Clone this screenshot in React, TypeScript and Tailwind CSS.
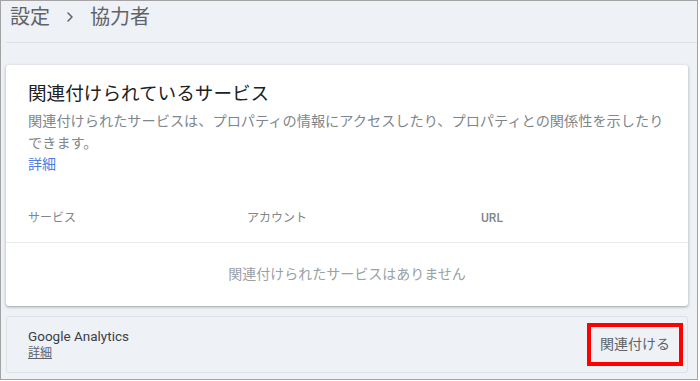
import { ChevronRight } from "lucide-react";

const font = {
  fontFamily: 'Roboto, "Noto Sans CJK JP", "Noto Sans", sans-serif',
};

export default function App() {
  return (
    <div className="h-[381px] w-[700px] bg-white" style={font}>
      <div className="h-[380px] w-[698px] overflow-hidden border border-[#a3a3a3] bg-[#eef1f6]">
        {/* breadcrumb */}
        <div className="ml-[5px] flex h-[42px] items-start border-b border-[#dde1e6] pl-[4px]">
          <div className="flex h-[32px] items-center text-[20px] leading-[32px] text-[#5f6368]">
            <span>設定</span>
            <ChevronRight aria-hidden="true" className="mx-[12px] size-[16px]" strokeWidth={2.25} />
            <span>協力者</span>
          </div>
        </div>

        {/* linked services card */}
        <section className="ml-[5px] mt-[22px] w-[682px] rounded-[3px] bg-white shadow-[0_1px_2px_rgba(60,64,67,0.3),0_1px_3px_1px_rgba(60,64,67,0.12)]">
          <div className="pl-[22px] pr-[12px] pt-[18px]">
            <h2 className="text-[18.6px] leading-[22px] font-normal text-[#202124]">
              関連付けられているサービス
            </h2>
            <p className="mt-[5px] text-[14.2px] leading-[22px] text-[#80868b]">
              関連付けられたサービスは、プロパティの情報にアクセスしたり、プロパティとの関係性を示したりできます。
            </p>
            <a href="#" className="block text-[14px] leading-[20px] text-[#4a7ee6]">
              詳細
            </a>
          </div>

          <div className="mt-[20px] flex h-[49px] items-center border-b border-[#e8eaed] px-[22px] text-[12px] text-[#80868b]">
            <span className="w-[219px]">サービス</span>
            <span className="w-[234px]">アカウント</span>
            <span className="font-medium">URL</span>
          </div>

          <div className="flex h-[63px] items-center justify-center text-[14px] text-[#9aa0a6]">
            関連付けられたサービスはありません
          </div>
        </section>

        {/* Google Analytics row */}
        <div className="ml-[5px] mt-[10px] flex h-[57px] w-[682px] items-center justify-between rounded-[3px] border border-[#dde1e6] bg-[#eef1f6] pl-[21px] pr-[4px]">
          <div className="flex flex-col">
            <span className="text-[13.5px] leading-[18px] text-[#3c4043]">Google Analytics</span>
            <a href="#" className="text-[12px] leading-[17px] text-[#5f6368] underline">
              詳細
            </a>
          </div>
          <button
            type="button"
            className="flex h-[43px] w-[96px] items-center justify-center border-4 border-[#ff0000] text-[14px] text-[#5f6368]"
          >
            関連付ける
          </button>
        </div>
      </div>
    </div>
  );
}
